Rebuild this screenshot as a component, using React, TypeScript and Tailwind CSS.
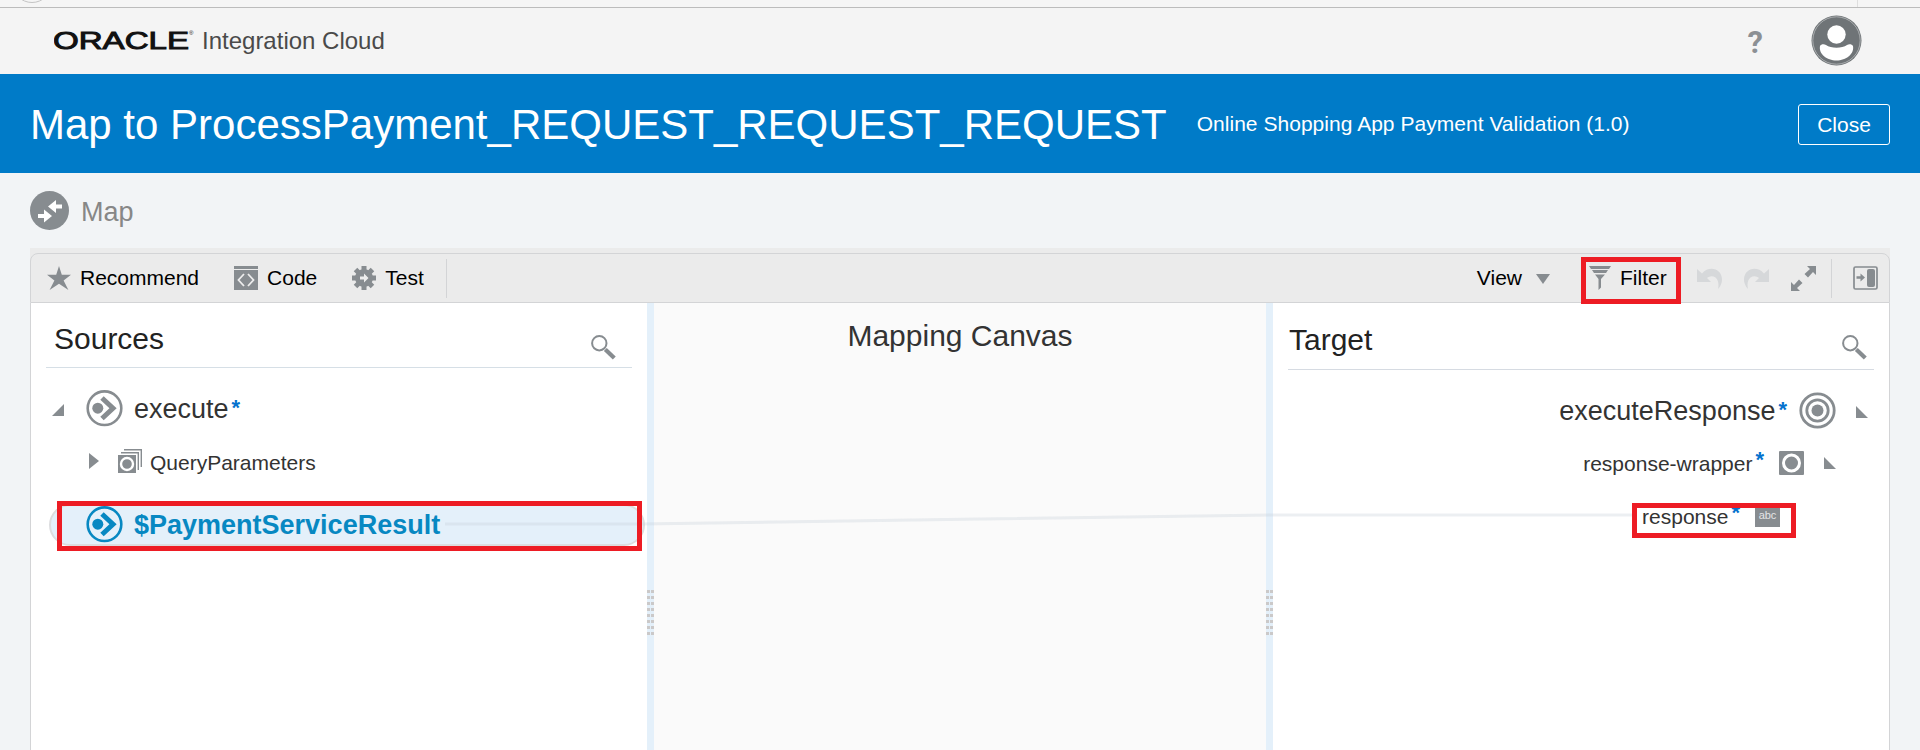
import React from "react";

const Star = () => (
  <svg width="24" height="24" viewBox="0 0 24 24" fill="#878c90">
    <path d="M12 0l2.8 8.800H24l-7.400 5.600 4.800 9.600L12 17.800 2.600 24l4.800-9.600L0 8.800h9.200z" />
  </svg>
);

const CodeIcon = () => (
  <svg width="24" height="24" viewBox="0 0 24 24">
    <path d="M0 0h24v3H0zM0 4h24v20H0z" fill="#878c90" />
    <path d="M10 8l-5.500 6 5.500 6M14 8l5.500 6-5.500 6" fill="none" stroke="#ededed" strokeWidth="1.8" />
  </svg>
);

const Gear = () => (
  <svg width="24" height="24" viewBox="0 0 24 24" fill="#878c90">
    <circle cx="12" cy="12" r="9" />
    <path d="M9.500 0h5v24h-5zM0 9.500h24v5H0z" />
    <path d="M9.500 0h5v24h-5zM0 9.500h24v5H0z" transform="rotate(45 12 12)" />
    <path d="M8 10.500h4V7.500l4.500 4.500-4.500 4.500v-3H8z" fill="#ededed" />
  </svg>
);

const FilterIcon = () => (
  <svg width="22" height="24" viewBox="0 0 22 24" fill="#878c90">
    <path d="M0 0h22l-2 3H2zM3 4h16l-2 3H5zM6 8.500h10l-4 4.500v8.500L9.500 24V13z" />
  </svg>
);

const Undo = ({ flip = false }: { flip?: boolean }) => (
  <svg width="25" height="21" viewBox="0 0 25 21" fill="#d6d8da" className={flip ? "-scale-x-100" : ""}>
    <path d="M0 1l5 4.500C9 1 14 0 18.500 1.500 24 3.500 26 10 24.500 15c-.8 2.500-2 4.500-3.500 6 1-4.500.5-9-2.500-11.500-3-2.200-6-1.500-8.500.5l4 4H0z" />
  </svg>
);

const Expand = () => (
  <svg width="25" height="25" viewBox="0 0 25 25" fill="#878c90">
    <path d="M16 0h9v9l-3-3-5 5.500-3.500-3.500L19 3zM0 16l3 3 5-5.500 3.500 3.500L6 22l3 3H0z" />
  </svg>
);

const PanelIcon = () => (
  <svg width="25" height="24" viewBox="0 0 25 24">
    <rect x="1" y="1" width="23" height="22" rx="1.500" fill="none" stroke="#878c90" strokeWidth="1.700" />
    <rect x="14" y="3" width="8" height="18" rx="2" fill="#878c90" />
    <path d="M3.500 10.300h4V7.500L12 11.500l-4.500 4v-2.800h-4z" fill="#878c90" />
  </svg>
);

const SearchIcon = () => (
  <svg width="25" height="25" viewBox="0 0 25 25" fill="none" stroke="#878c90">
    <circle cx="8.300" cy="8.200" r="7.200" strokeWidth="2" />
    <path d="M14.300 14.500l9 8.500" strokeWidth="4.200" />
  </svg>
);

const SourceIcon = ({ color }: { color: string }) => (
  <svg width="37" height="37" viewBox="0 0 37 37">
    <circle cx="18.500" cy="18.200" r="16.800" fill="none" stroke={color} strokeWidth="2.600" />
    <circle cx="11.800" cy="18.200" r="5.500" fill={color} />
    <path d="M16 8l11 10.200L16 28.500" fill="none" stroke={color} strokeWidth="5" />
  </svg>
);

const TargetIcon = () => (
  <svg width="37" height="37" viewBox="0 0 37 37" fill="none" stroke="#878c90">
    <circle cx="18.500" cy="18.500" r="16.700" strokeWidth="2.800" />
    <circle cx="18.500" cy="18.500" r="10.700" strokeWidth="2.800" />
    <circle cx="18.500" cy="18.500" r="6" fill="#878c90" stroke="none" />
  </svg>
);

const StackIcon = () => (
  <svg width="24" height="24" viewBox="0 0 24 24">
    <path d="M6 .700h17.300V18M3 3.700h17.300V21" fill="none" stroke="#878c90" strokeWidth="1.400" />
    <rect y="6" width="18" height="18" fill="#878c90" />
    <circle cx="9" cy="15" r="6" fill="#878c90" stroke="#fff" strokeWidth="2.400" />
  </svg>
);

const WrapperIcon = () => (
  <svg width="25" height="24" viewBox="0 0 25 24">
    <rect width="25" height="24" rx="1" fill="#878c90" />
    <circle cx="12.500" cy="12" r="8" fill="none" stroke="#fff" strokeWidth="3" />
  </svg>
);

const Grip = () => (
  <svg width="7" height="45" viewBox="0 0 7 45" fill="#cbc9c9">
    {[0, 6, 12, 18, 24, 30, 36, 42].map((y) => (
      <path key={y} d={`M0 ${y}h3v3h-3zM4 ${y}h3v3h-3z`} />
    ))}
  </svg>
);

const Required = ({ className = "" }: { className?: string }) => (
  <span className={`text-[22px] leading-none font-bold text-[#0572ce] ${className}`}>*</span>
);

export default function App() {
  return (
    <div className="flex h-[750px] w-[1920px] flex-col overflow-hidden bg-[#f2f4f6] font-['Liberation_Sans',Arial,sans-serif] text-[21px] leading-none text-black">
      <div className="flex h-2 shrink-0 border-b border-[#bcbcbc] bg-[#f5f5f5]">
        <svg width="1920" height="7" viewBox="0 0 1920 7" fill="none" stroke="#c4c4c4">
          <circle cx="32" cy="-17" r="19.500" />
          <path d="M1857.500 0v7" stroke="#dedede" />
        </svg>
      </div>

      <header className="flex h-[66px] shrink-0 items-center bg-[#f4f4f4] pr-[58px] pl-[54px]">
        <svg width="141" height="30" viewBox="0 0 141 30" fill="#111" stroke="#111">
          <text x="-1" y="22.500" fontSize="24.500" strokeWidth="1" textLength="136" lengthAdjust="spacingAndGlyphs" fontFamily="Liberation Sans, Arial, sans-serif">ORACLE</text>
          <text x="135" y="9" fontSize="6" stroke="none">®</text>
        </svg>
        <span className="ml-[7px] text-[24px] text-[#4a4a4a]">Integration Cloud</span>
        <span className="mt-0.5 mr-[48px] ml-auto font-[Roboto] text-[31px] font-bold text-[#8c9094]">?</span>
        <svg width="51" height="51" viewBox="0 0 51 51" className="mb-px">
          <circle cx="25.500" cy="25.500" r="25" fill="#6f7477" />
          <circle cx="25.500" cy="25.500" r="23.700" fill="none" stroke="#c3c5c7" strokeWidth=".7" />
          <circle cx="25.500" cy="19.500" r="9.200" fill="#fff" />
          <path d="M9 31c1-2 4-2.500 6-1 5 3.500 16 3.500 21 0 2-1.500 5-1 6 1 1.500 8-7 14.500-16.500 14.500S7.500 39 9 31z" fill="#fff" />
        </svg>
      </header>

      <div className="flex h-[99px] shrink-0 items-center bg-[#007bc8] pr-[30px] pl-[30px] text-white">
        <h1 className="mt-0.5 text-[42px] whitespace-nowrap">Map to ProcessPayment_REQUEST_REQUEST_REQUEST</h1>
        <span className="ml-[30px] tracking-[0.03px] whitespace-nowrap">Online Shopping App Payment Validation (1.0)</span>
        <button className="mt-0.5 ml-auto flex h-[41px] w-[92px] items-center justify-center rounded-[3px] border border-white">Close</button>
      </div>

      <div className="flex h-[75px] shrink-0 items-center pl-[30px]">
        <svg width="39" height="39" viewBox="0 0 39 39">
          <circle cx="19.500" cy="19.500" r="19.500" fill="#878c90" />
          <path d="M8 23h6v-4.500l8 6.500-8 6.500V27H8zM32 13.500h-6V9l-8 6.500 8 6.500v-4.500h6z" fill="#fff" />
        </svg>
        <span className="mt-1 ml-[12px] text-[27px] text-[#878787]">Map</span>
      </div>

      <main className="mx-[30px] flex min-h-0 flex-1 flex-col bg-[#ebebeb] pt-[5px]">
        <div className="relative z-10 flex h-[50px] shrink-0 items-center rounded-t-lg border border-[#d3d4d6] pr-[11px] pl-4">
          <Star />
          <span className="mb-0.5 ml-[9px]">Recommend</span>
          <span className="ml-[35px]"><CodeIcon /></span>
          <span className="mb-0.5 ml-[9px]">Code</span>
          <span className="ml-[35px]"><Gear /></span>
          <span className="mb-0.5 ml-[9px]">Test</span>
          <span className="ml-[22px] h-[39px] w-px bg-[#d3d4d6]" />
          <span className="mb-0.5 ml-auto">View</span>
          <svg width="14" height="10" viewBox="0 0 14 10" className="mt-0.5 mr-[31px] ml-3.5" fill="#878c90"><path d="M0 0h14L7 10z" /></svg>
          <span className="-my-2 flex h-[47px] w-[100px] translate-y-[2px] items-center border-[5px] border-[#ed1c24] pl-[3px]">
            <span className="-translate-y-[2px]"><FilterIcon /></span>
            <span className="ml-[9px] -translate-y-[3px]">Filter</span>
          </span>
          <span className="ml-4"><Undo /></span>
          <span className="ml-[22px]"><Undo flip /></span>
          <span className="ml-[22px]"><Expand /></span>
          <span className="ml-[15px] h-[39px] w-px bg-[#d3d4d6]" />
          <span className="ml-[21px]"><PanelIcon /></span>
        </div>

        <div className="relative flex min-h-0 flex-1 border-x border-[#d3d4d6] bg-white text-[#333]">
          <section className="flex w-[616px] shrink-0 flex-col">
            <div className="mr-[15px] ml-[15px] flex h-[65px] shrink-0 items-center border-b border-[#d6dfe6] pr-4 pl-2">
              <h2 className="mt-[7px] text-[30px] text-[#222]">Sources</h2>
              <span className="mt-[24px] ml-auto"><SearchIcon /></span>
            </div>
            <div className="mt-[22px] flex h-[37px] items-center pl-[21px]">
              <svg width="12" height="12" className="mt-0.5" fill="#878c90"><path d="M12 0v12H0z" /></svg>
              <span className="ml-[22px]"><SourceIcon color="#878c90" /></span>
              <span className="mt-0.5 ml-[11px] text-[27px]">execute</span>
              <Required className="mb-0.5 ml-[3px]" />
            </div>
            <div className="mt-[17px] flex h-[37px] items-center pl-[58px]">
              <svg width="10" height="16" className="mb-1" fill="#878c90"><path d="M0 0l10 8-10 8z" /></svg>
              <span className="mb-[3px] ml-[19px]"><StackIcon /></span>
              <span className="ml-2">QueryParameters</span>
            </div>
            <div className="mt-[23px] ml-[18px] flex h-[42px] w-[596px] items-center rounded-full border-2 border-[#dcdddf] bg-[#e4f0fa] pl-[35px]">
              <span className="mb-px"><SourceIcon color="#0788c2" /></span>
              <span className="ml-[11px] text-[27px] font-bold text-[#0788c2]">$PaymentServiceResult</span>
            </div>
          </section>
          <div className="flex w-[7px] shrink-0 items-center bg-[#e4f0fa] pt-[172px]"><Grip /></div>
          <section className="flex flex-1 justify-center bg-[#fafafa] pt-[18px]">
            <h2 className="text-[30px]">Mapping Canvas</h2>
          </section>
          <div className="flex w-[7px] shrink-0 items-center bg-[#e4f0fa] pt-[172px]"><Grip /></div>
          <section className="flex w-[616px] shrink-0 flex-col">
            <div className="mr-[15px] ml-[15px] flex h-[67px] shrink-0 items-center border-b border-[#d6dbe2] pr-[7px] pl-px">
              <h2 className="mt-[7px] text-[30px] text-[#222]">Target</h2>
              <span className="mt-[22px] ml-auto"><SearchIcon /></span>
            </div>
            <div className="mt-[22px] flex h-[37px] items-center justify-end pr-[21px]">
              <span className="mt-0.5 text-[27px]">executeResponse</span>
              <Required className="mb-0.5 ml-[3px]" />
              <span className="ml-[12px]"><TargetIcon /></span>
              <svg width="12" height="12" className="mt-[3px] ml-[20px]" fill="#878c90"><path d="M0 0v12h12z" /></svg>
            </div>
            <div className="mt-[19px] flex h-[30px] items-center justify-end pr-[53px]">
              <span>response-wrapper</span>
              <Required className="mb-1.5 ml-[3px]" />
              <span className="ml-[15px]"><WrapperIcon /></span>
              <svg width="12" height="12" className="ml-[20px]" fill="#878c90"><path d="M0 0v12h12z" /></svg>
            </div>
            <div className="mt-[23px] flex h-[30px] items-center justify-end pr-[109px]">
              <span>response</span>
              <Required className="mb-1.5 ml-[3px]" />
              <span className="mb-0.5 ml-[15px] flex h-[24px] w-[25px] items-center justify-center bg-[#878c90] text-[11px] text-[#e4e5e6]">abc</span>
            </div>
          </section>

          <svg width="1858" height="447" viewBox="0 0 1858 447" className="pointer-events-none absolute top-0 left-0" fill="none">
            <path d="M414 221H610C700 221 1120 212 1240 212H1602" stroke="#c8d2da" strokeOpacity=".35" strokeWidth="3" />
          </svg>
          <div className="absolute top-[198px] left-[26px] h-[50px] w-[585px] border-[5px] border-[#ed1c24]" />
          <div className="absolute top-[200px] left-[1601px] h-[35px] w-[164px] border-[5px] border-[#ed1c24]" />
        </div>
      </main>
    </div>
  );
}
